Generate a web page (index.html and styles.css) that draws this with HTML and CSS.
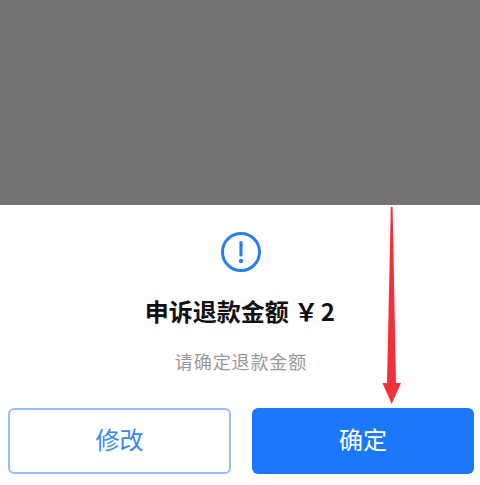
FILE: index.html
```html
<!DOCTYPE html>
<html lang="zh-CN">
<head>
<meta charset="utf-8">
<title>申诉退款金额</title>
<link rel="stylesheet" href="styles.css">
</head>
<body>
<div class="page">
  <div class="backdrop"></div>
  <section class="sheet">
    <svg class="alert-icon" viewBox="0 0 40 40" aria-hidden="true">
      <circle cx="20" cy="20" r="18.5" fill="none" stroke="#2a7fee" stroke-width="3"/>
      <path d="M20 10.5V23" fill="none" stroke="#2a7fee" stroke-width="3.2" stroke-linecap="round"/>
      <circle cx="20" cy="29" r="2.2" fill="#2a7fee"/>
    </svg>
    <h1 class="title">申诉退款金额 <span class="amount">￥2</span></h1>
    <p class="hint">请确定退款金额</p>
    <div class="actions">
      <button class="btn btn-outline">修改</button>
      <button class="btn btn-solid">确定</button>
    </div>
  </section>
  <svg class="arrow" viewBox="0 0 24 200" aria-hidden="true">
    <path d="M10.8 0H12.6L16 176L21 176L11.7 197L2.5 176L7 176Z" fill="#f0303a"/>
  </svg>
</div>
</body>
</html>
```
FILE: styles.css
```css
* { box-sizing: border-box; }
html, body { margin: 0; padding: 0; }
body { background: #fff; font-family: "Noto Sans CJK SC", "Liberation Sans", sans-serif; }
.page { position: relative; width: 480px; height: 485px; overflow: hidden; display: flex; flex-direction: column; }
.backdrop { height: 205px; flex: none; background: #737373; }
.sheet { flex: 1; background: #fff; display: flex; flex-direction: column; align-items: center; padding-top: 27px; }
.alert-icon { width: 40px; height: 40px; display: block; margin-left: 2px; }
.title { margin: 22px 0 0 2px; font-size: 24px; line-height: 34px; font-weight: 700; color: #111; white-space: nowrap; }
.amount { letter-spacing: 2.5px; }
.hint { margin: 20px 0 0 2px; font-size: 18px; line-height: 26px; color: #999; letter-spacing: .9px; }
.actions { margin-top: 34px; width: 100%; padding: 0 6px 0 8px; display: grid; grid-template-columns: 223px 222px; gap: 21px; }
.btn { height: 66px; border-radius: 6px; font: inherit; font-size: 24px; padding: 0 0 5px; }
.btn-outline { background: #fff; border: 2px solid #93c0f8; color: #3a87ef; }
.btn-solid { background: #1c78fb; border: 0; color: #fff; }
.arrow { position: absolute; left: 380px; top: 207px; width: 24px; height: 200px; }
```
